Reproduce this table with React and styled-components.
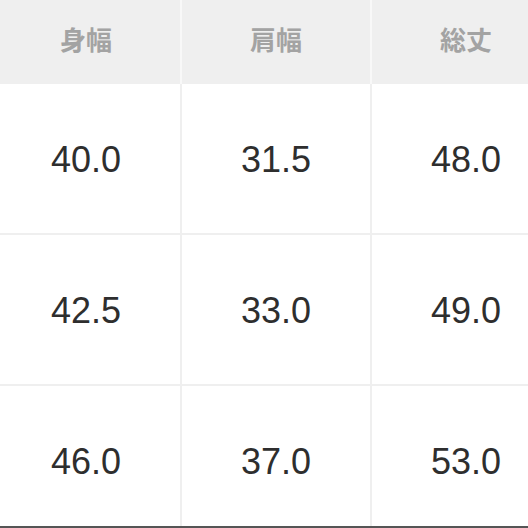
import React from 'react';
import styled, { createGlobalStyle } from 'styled-components';

const GlobalStyle = createGlobalStyle`
  html, body {
    margin: 0;
    padding: 0;
    background: #ffffff;
  }
`;

const Frame = styled.div`
  width: 528px;
  height: 528px;
  overflow: hidden;
  box-sizing: border-box;
  border-bottom: 2px solid #555555;
`;

const Table = styled.div`
  display: grid;
  grid-template-columns: repeat(3, 190px);
  width: 570px;
  margin-left: -8px;
`;

const HeadCell = styled.div`
  height: 84px;
  box-sizing: border-box;
  display: flex;
  align-items: center;
  justify-content: center;
  background: #efefef;
  border-right: 2px solid ${(p) => (p.$last ? 'transparent' : '#f8f8f8')};
  color: #a3a3a3;
  font-family: "Noto Sans CJK JP", "Noto Sans", sans-serif;
  font-weight: 700;
  font-size: 26px;
  padding-bottom: 8px;
`;

const Cell = styled.div`
  height: 151px;
  box-sizing: border-box;
  display: flex;
  align-items: center;
  justify-content: center;
  border-right: 2px solid ${(p) => (p.$last ? 'transparent' : '#efefef')};
  border-bottom: 2px solid #efefef;
  color: #2e2e2e;
  font-family: "Liberation Sans", Arial, sans-serif;
  font-size: 36px;
  padding-top: 2px;
`;

const headers = ['身幅', '肩幅', '総丈'];
const rows = [
  ['40.0', '31.5', '48.0'],
  ['42.5', '33.0', '49.0'],
  ['46.0', '37.0', '53.0'],
];

export default function App() {
  return (
    <>
      <GlobalStyle />
      <Frame>
        <Table>
          {headers.map((h, i) => (
            <HeadCell key={h} $last={i === headers.length - 1}>{h}</HeadCell>
          ))}
          {rows.map((row, r) =>
            row.map((v, i) => (
              <Cell key={`${r}-${i}`} $last={i === row.length - 1}>{v}</Cell>
            ))
          )}
        </Table>
      </Frame>
    </>
  );
}
